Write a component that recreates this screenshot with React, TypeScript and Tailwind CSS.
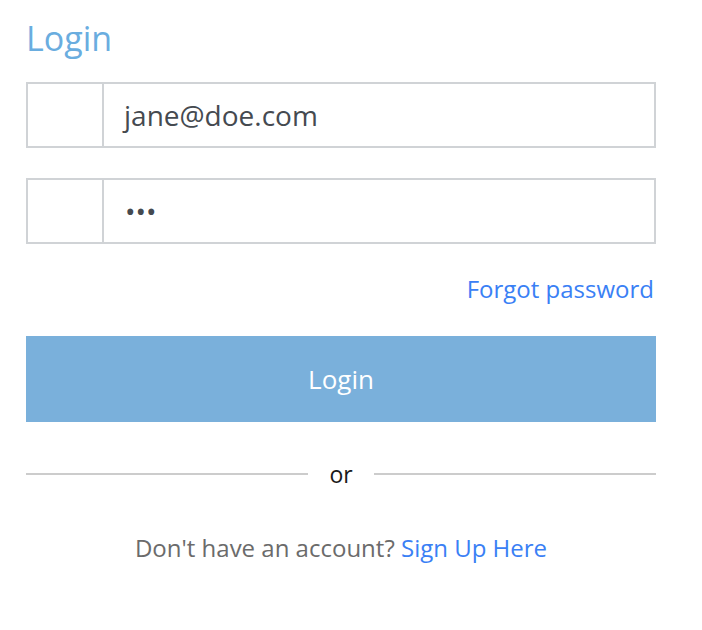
import React from "react";

export default function App() {
  return (
    <div
      className="w-[702px] h-[630px] bg-white"
      style={{ fontFamily: '"Open Sans", "Liberation Sans", sans-serif' }}
    >
      <div className="w-[630px] ml-[26px] flex flex-col">
        <h1 className="mt-[18px] h-[40px] text-[34px] leading-[40px] font-normal text-[#6aaddf]">
          Login
        </h1>

        <div className="mt-[24px] h-[66px] flex border-2 border-[#d0d3d6]">
          <div className="w-[76px] shrink-0 border-r-2 border-[#d0d3d6]" />
          <div className="flex-1 flex items-center pl-[20px] text-[28px] leading-[36px] text-[#454a50]">
            jane@doe.com
          </div>
        </div>

        <div className="mt-[30px] h-[66px] flex border-2 border-[#d0d3d6]">
          <div className="w-[76px] shrink-0 border-r-2 border-[#d0d3d6]" />
          <div className="flex-1 flex items-center pl-[21px] text-[28px] leading-[36px] text-[#454a50]">
            •••
          </div>
        </div>

        <div className="mt-[30px] h-[30px] flex justify-end pr-[2px]">
          <a className="text-[24px] leading-[30px] text-[#3a80f5] cursor-pointer">
            Forgot password
          </a>
        </div>

        <button className="mt-[32px] h-[86px] w-full bg-[#7ab0db] text-white text-[26px] leading-[34px] flex items-center justify-center">
          Login
        </button>

        <div className="mt-[37px] h-[30px] flex items-center">
          <div className="flex-1 h-[2px] bg-[#cccccc]" />
          <span className="px-[21px] text-[23px] leading-[30px] text-[#1a1a1a]">or</span>
          <div className="flex-1 h-[2px] bg-[#cccccc]" />
        </div>

        <div className="mt-[44px] h-[30px] text-center text-[24px] leading-[30px] text-[#6b6b6b]">
          Don't have an account?{" "}
          <a className="text-[#3a80f5] cursor-pointer">Sign Up Here</a>
        </div>
      </div>
    </div>
  );
}
